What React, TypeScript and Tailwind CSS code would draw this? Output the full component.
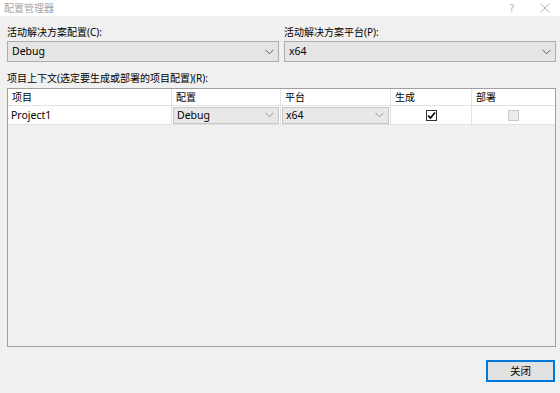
import React from "react";

const font = "font-['Segoe_UI','Noto_Sans','Noto_Sans_CJK_SC',sans-serif]";

function Chevron({ className = "" }: { className?: string }) {
  return (
    <svg width="9" height="6" viewBox="0 0 9 6" className={className}>
      <path d="M0.5 0.8 L4.5 4.8 L8.5 0.8" fill="none" stroke="#606060" strokeWidth="1" />
    </svg>
  );
}

function Combo({ value }: { value: string }) {
  return (
    <div className="h-[21px] bg-[#e5e5e5] border border-[#adadad] flex items-center justify-between pl-[4px] pr-[4px]">
      <span className="text-[10.5px] text-black leading-none">{value}</span>
      <Chevron />
    </div>
  );
}

function CellCombo({ value }: { value: string }) {
  return (
    <div className="h-[17px] w-full bg-[#e8e8e8] border border-[#c6c6c6] flex items-center justify-between pl-[3px] pr-[4px]">
      <span className="text-[10.5px] text-black leading-none">{value}</span>
      <Chevron className="opacity-60" />
    </div>
  );
}

const cols = [
  { name: "项目", w: "w-[164px]" },
  { name: "配置", w: "w-[109px]" },
  { name: "平台", w: "w-[110px]" },
  { name: "生成", w: "w-[81px]" },
  { name: "部署", w: "w-[83px]" },
];

export default function App() {
  return (
    <div className={`w-[560px] h-[393px] bg-[#f0f0f0] flex flex-col ${font}`}>
      {/* Title bar */}
      <div className="h-[16px] bg-white flex items-center justify-between pl-[4px] pr-[10px]">
        <span className="text-[10px] text-[#a8a8a8] leading-none">配置管理器</span>
        <div className="flex items-center gap-[26px] text-[#b0b0b0]">
          <span className="text-[10px] leading-none">?</span>
          <svg width="10" height="10" viewBox="0 0 10 10">
            <path d="M0.5 0.5 L9.5 9.5 M9.5 0.5 L0.5 9.5" stroke="#b0b0b0" strokeWidth="1" />
          </svg>
        </div>
      </div>

      <div className="flex flex-col pl-[7px] pr-[4px]">
        {/* Solution config / platform */}
        <div className="grid grid-cols-2 gap-x-[5px] mt-[9px]">
          <div className="flex flex-col gap-[2px]">
            <span className="text-[10px] leading-[14px] h-[14px] text-black">活动解决方案配置(C):</span>
            <Combo value="Debug" />
          </div>
          <div className="flex flex-col gap-[2px]">
            <span className="text-[10px] leading-[14px] h-[14px] text-black">活动解决方案平台(P):</span>
            <Combo value="x64" />
          </div>
        </div>

        <span className="text-[10px] leading-[14px] h-[14px] text-black mt-[9px]">
          项目上下文(选定要生成或部署的项目配置)(R):
        </span>

        {/* Project grid */}
        <div className="mt-[3px] h-[259px] border border-[#a0a0a0] flex flex-col">
          <div className="flex h-[17px] bg-white border-b border-[#e2e2e2]">
            {cols.map((c, i) => (
              <div
                key={c.name}
                className={`${c.w} h-full flex items-center pl-[4px] text-[10px] text-black leading-none ${i < cols.length - 1 ? "border-r border-[#e2e2e2]" : ""}`}
              >
                {c.name}
              </div>
            ))}
          </div>
          <div className="flex h-[19px] bg-white border-b border-[#e2e2e2]">
            <div className="w-[164px] h-full flex items-center pl-[3px] text-[10.5px] text-black leading-none border-r border-[#e2e2e2]">
              Project1
            </div>
            <div className="w-[109px] h-full flex items-center px-[1px] border-r border-[#e2e2e2]">
              <CellCombo value="Debug" />
            </div>
            <div className="w-[110px] h-full flex items-center px-[1px] border-r border-[#e2e2e2]">
              <CellCombo value="x64" />
            </div>
            <div className="w-[81px] h-full flex items-center justify-center border-r border-[#e2e2e2]">
              <div className="w-[11px] h-[11px] border border-[#333] bg-white flex items-center justify-center">
                <svg width="9" height="9" viewBox="0 0 9 9">
                  <path d="M1 4.5 L3.5 7 L8 1.5" fill="none" stroke="#000" strokeWidth="1.7" />
                </svg>
              </div>
            </div>
            <div className="w-[83px] h-full flex items-center justify-center">
              <div className="w-[11px] h-[11px] border border-[#c8c8c8] bg-[#ececec]" />
            </div>
          </div>
        </div>

        {/* Footer */}
        <div className="flex justify-end mt-[13px] pr-[1px]">
          <button className="w-[69px] h-[22px] bg-[#e1e1e1] border-2 border-[#0078d7] text-[10.5px] text-black leading-none flex items-center justify-center">
            关闭
          </button>
        </div>
      </div>
    </div>
  );
}
